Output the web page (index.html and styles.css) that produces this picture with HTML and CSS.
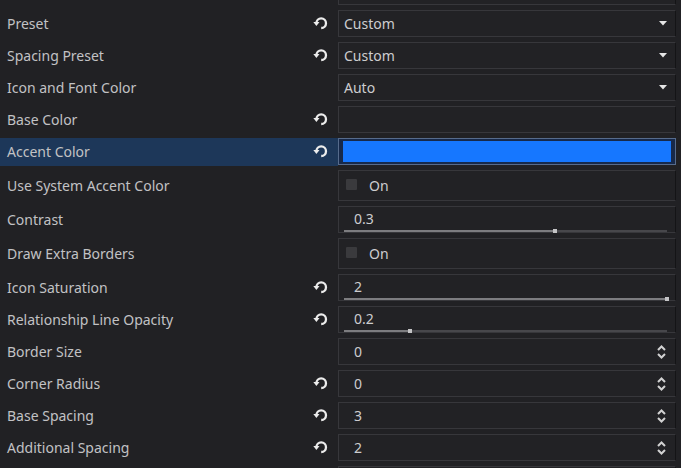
FILE: index.html
```html
<!DOCTYPE html>
<html>
<head>
<meta charset="utf-8">
<link rel="stylesheet" href="styles.css">
</head>
<body>
<svg width="0" height="0" class="defs">
  <defs>
    <symbol id="reset" viewBox="0 0 16 16">
      <path d="M3.4 8.2 A4.8 4.8 0 1 1 8.2 13" fill="none" stroke="#ececec" stroke-width="2.3"/>
      <polygon points="0.3,7 6.5,7 3.4,11" fill="#ececec"/>
    </symbol>
    <symbol id="drop" viewBox="0 0 8 5">
      <polygon points="0,0 8,0 4,4.5" fill="#e6e6e6"/>
    </symbol>
    <symbol id="spin" viewBox="0 0 9 16">
      <polyline points="1,6 4.5,2.5 8,6" fill="none" stroke="#d2d2d2" stroke-width="2"/>
      <polyline points="1,10 4.5,13.5 8,10" fill="none" stroke="#d2d2d2" stroke-width="2"/>
    </symbol>
  </defs>
</svg>
<div class="list">
  <div class="row stub"><div class="label"></div><div class="field stub-field"></div></div>

  <div class="row">
    <div class="label"><span>Preset</span><svg class="reset"><use href="#reset"/></svg></div>
    <div class="field dropdown"><span>Custom</span><svg class="arrow"><use href="#drop"/></svg></div>
  </div>
  <div class="row">
    <div class="label"><span>Spacing Preset</span><svg class="reset"><use href="#reset"/></svg></div>
    <div class="field dropdown"><span>Custom</span><svg class="arrow"><use href="#drop"/></svg></div>
  </div>
  <div class="row">
    <div class="label"><span>Icon and Font Color</span></div>
    <div class="field dropdown"><span>Auto</span><svg class="arrow"><use href="#drop"/></svg></div>
  </div>
  <div class="row">
    <div class="label"><span>Base Color</span><svg class="reset"><use href="#reset"/></svg></div>
    <div class="field colorbox"></div>
  </div>
  <div class="row selected">
    <div class="label"><span>Accent Color</span><svg class="reset"><use href="#reset"/></svg></div>
    <div class="field colorbox accent"><div class="swatch"></div></div>
  </div>
  <div class="row tall">
    <div class="label"><span>Use System Accent Color</span></div>
    <div class="field check"><span class="box"></span><span>On</span></div>
  </div>
  <div class="row">
    <div class="label"><span>Contrast</span></div>
    <div class="field slider">
      <span class="val">0.3</span>
      <div class="track"><div class="fill" style="width:65.3%"></div><div class="grab" style="left:65.3%"></div></div>
    </div>
  </div>
  <div class="row tall">
    <div class="label"><span>Draw Extra Borders</span></div>
    <div class="field check"><span class="box"></span><span>On</span></div>
  </div>
  <div class="row">
    <div class="label"><span>Icon Saturation</span><svg class="reset"><use href="#reset"/></svg></div>
    <div class="field slider">
      <span class="val">2</span>
      <div class="track"><div class="fill" style="width:100%"></div><div class="grab" style="left:100%"></div></div>
    </div>
  </div>
  <div class="row">
    <div class="label"><span>Relationship Line Opacity</span><svg class="reset"><use href="#reset"/></svg></div>
    <div class="field slider">
      <span class="val">0.2</span>
      <div class="track"><div class="fill" style="width:20.4%"></div><div class="grab" style="left:20.4%"></div></div>
    </div>
  </div>
  <div class="row">
    <div class="label"><span>Border Size</span></div>
    <div class="field spin"><span>0</span><svg class="updown"><use href="#spin"/></svg></div>
  </div>
  <div class="row">
    <div class="label"><span>Corner Radius</span><svg class="reset"><use href="#reset"/></svg></div>
    <div class="field spin"><span>0</span><svg class="updown"><use href="#spin"/></svg></div>
  </div>
  <div class="row">
    <div class="label"><span>Base Spacing</span><svg class="reset"><use href="#reset"/></svg></div>
    <div class="field spin"><span>3</span><svg class="updown"><use href="#spin"/></svg></div>
  </div>
  <div class="row">
    <div class="label"><span>Additional Spacing</span><svg class="reset"><use href="#reset"/></svg></div>
    <div class="field spin"><span>2</span><svg class="updown"><use href="#spin"/></svg></div>
  </div>
  <div class="row">
    <div class="label"></div>
    <div class="field"></div>
  </div>
</div>
</body>
</html>
```
FILE: styles.css
```css
html, body {
  margin: 0;
  padding: 0;
  background: #212124;
  overflow: hidden;
}
body {
  width: 681px;
  height: 468px;
  font-family: "Noto Sans", "DejaVu Sans", sans-serif;
  font-size: 14px;
  color: #c2c2c4;
}
.defs {
  position: absolute;
  width: 0;
  height: 0;
}
.list {
  display: flex;
  flex-direction: column;
  gap: 5px;
}
.row {
  display: grid;
  grid-template-columns: 338px 338px;
  height: 27px;
}
.row.tall {
  height: 31px;
}
.row.stub {
  height: 5px;
}
.label {
  display: flex;
  align-items: center;
  justify-content: space-between;
  padding: 0 9px 1px 7px;
  white-space: nowrap;
}
.selected .label {
  background: #1d3759;
  margin-bottom: -1px;
  padding-bottom: 2px;
}
.reset {
  width: 16px;
  height: 16px;
}
.field {
  box-sizing: border-box;
  border: 1px solid #37373b;
  border-right-color: #141416;
  background: #222225;
  color: #cdcdcf;
  display: flex;
  align-items: center;
}
.stub-field {
  border-top: none;
}
.dropdown {
  justify-content: space-between;
  padding: 0 8px 0 5px;
}
.arrow {
  width: 8px;
  height: 5px;
}
.accent {
  border-color: #566b8c;
  background: #17294a;
  padding: 2px 4px;
  align-items: stretch;
}
.swatch {
  flex: 1;
  background: #1677ff;
}
.check {
  padding-left: 7px;
  gap: 12px;
}
.check .box {
  width: 11px;
  height: 11px;
  background: #3a3a3d;
  border-radius: 1px;
  margin-top: -2px;
}
.slider {
  flex-direction: column;
  align-items: stretch;
  padding: 3px 8px 0 5px;
}
.slider .val {
  line-height: 18px;
  padding-left: 10px;
}
.track {
  position: relative;
  height: 2px;
  margin-top: 2px;
  background: #47474b;
}
.fill {
  height: 2px;
  background: #7d7d80;
}
.grab {
  position: absolute;
  top: -1px;
  width: 4px;
  height: 4px;
  margin-left: -2px;
  background: #c4c4c6;
}
.spin {
  justify-content: space-between;
  padding: 0 9px 0 15px;
}
.updown {
  width: 9px;
  height: 16px;
}
```
